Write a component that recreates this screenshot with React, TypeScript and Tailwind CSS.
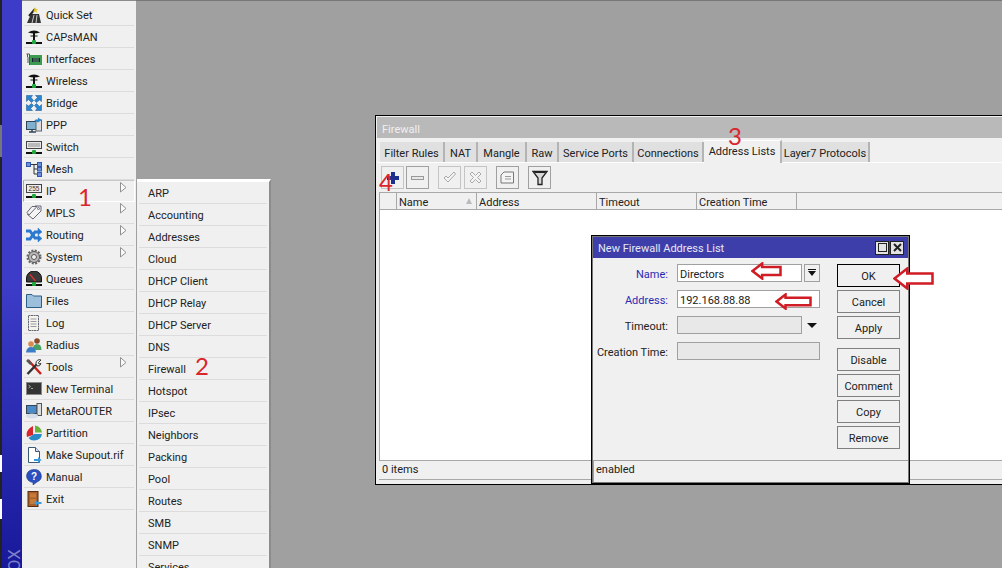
const mainMenu = [
  { label: "Quick Set", icon: "quickset" },
  { label: "CAPsMAN", icon: "antenna" },
  { label: "Interfaces", icon: "interfaces" },
  { label: "Wireless", icon: "antenna" },
  { label: "Bridge", icon: "bridge" },
  { label: "PPP", icon: "ppp" },
  { label: "Switch", icon: "switch" },
  { label: "Mesh", icon: "mesh" },
  { label: "IP", icon: "ip", arrow: true, active: true },
  { label: "MPLS", icon: "mpls", arrow: true },
  { label: "Routing", icon: "routing", arrow: true },
  { label: "System", icon: "system", arrow: true },
  { label: "Queues", icon: "queues" },
  { label: "Files", icon: "files" },
  { label: "Log", icon: "log" },
  { label: "Radius", icon: "radius" },
  { label: "Tools", icon: "tools", arrow: true },
  { label: "New Terminal", icon: "terminal" },
  { label: "MetaROUTER", icon: "meta" },
  { label: "Partition", icon: "partition" },
  { label: "Make Supout.rif", icon: "supout" },
  { label: "Manual", icon: "manual" },
  { label: "Exit", icon: "exit" },
];

const ipMenu = ["ARP", "Accounting", "Addresses", "Cloud", "DHCP Client", "DHCP Relay", "DHCP Server", "DNS", "Firewall", "Hotspot", "IPsec", "Neighbors", "Packing", "Pool", "Routes", "SMB", "SNMP", "Services"];

const tabs = [
  { label: "Filter Rules", w: "w-[65px]" },
  { label: "NAT", w: "w-[33px]" },
  { label: "Mangle", w: "w-[49px]" },
  { label: "Raw", w: "w-[32px]" },
  { label: "Service Ports", w: "w-[75px]" },
  { label: "Connections", w: "w-[70px]" },
];

const columns = [
  { label: "", w: "w-[17px]" },
  { label: "Name", w: "w-[80px]", sort: true },
  { label: "Address", w: "w-[120px]" },
  { label: "Timeout", w: "w-[100px]" },
  { label: "Creation Time", w: "w-[100px]" },
];

const Base = () => (
  <>
    <rect x="0" y="13" width="16" height="2" fill="#111" />
    <rect x="6" y="11" width="4" height="4" rx="1" fill="#1fa83c" />
  </>
);

function MenuIcon({ name }: { name: string }) {
  let body = null;
  switch (name) {
    case "quickset":
      body = (
        <>
          <path d="M1 16 L5 7 H13 L15 16 Z" fill="#333" />
          <path d="M6 16 L8 8 M10 16 L11 8" stroke="#ccc" strokeWidth="1" />
          <path d="M3 9 L9 2" stroke="#222" strokeWidth="2" />
          <path d="M9 0 L10 2 L12 2 L10.5 3.5 L11 6 L9 4.5 L7 5 L8 3 Z" fill="#e8c820" />
        </>
      );
      break;
    case "antenna":
      body = (
        <>
          <path d="M2 3.5 Q8 -0.5 14 3.5 Q8 5.5 2 3.5 Z" fill="#111" />
          <rect x="7" y="4" width="2" height="8" fill="#111" />
          <path d="M4.5 7 H11.5" stroke="#111" strokeWidth="1" />
          <Base />
        </>
      );
      break;
    case "interfaces":
      body = (
        <>
          <path d="M0.5 3 H3.5 V14 M1.5 3 V6 M2 6 V12" stroke="#555" strokeWidth="1" fill="none" />
          <rect x="4" y="4" width="12" height="10" fill="#3c9a52" />
          <rect x="6" y="7" width="8" height="4" fill="#123" />
          <path d="M8 7 V11 M10 7 V11 M12 7 V11" stroke="#8c8" strokeWidth="0.7" />
        </>
      );
      break;
    case "bridge":
      body = (
        <g fill="#2a86d0" stroke="#164e88" strokeWidth="0.5">
          <path d="M0.5 0.5 H6.5 L5 2.5 L7.5 5.5 L5.5 7.5 L2.5 4.5 L0.5 6.5 Z" />
          <path d="M15.5 0.5 V6.5 L13.5 5 L10.5 7.5 L8.5 5.5 L11.5 2.5 L9.5 0.5 Z" />
          <path d="M0.5 15.5 V9.5 L2.5 11 L5.5 8.5 L7.5 10.5 L4.5 13.5 L6.5 15.5 Z" />
          <path d="M15.5 15.5 H9.5 L11 13.5 L8.5 10.5 L10.5 8.5 L13.5 11.5 L15.5 9.5 Z" />
        </g>
      );
      break;
    case "ppp":
      body = (
        <>
          <rect x="0.5" y="4.5" width="11" height="8" fill="#7fb0d0" stroke="#345" />
          <rect x="10" y="3" width="5.5" height="11" fill="#ddd" stroke="#567" />
          <path d="M3 15 H10 M6 12 V15" stroke="#345" strokeWidth="1.5" />
          <path d="M8 3 H12 V0.5 L15.5 3 L12 5.5 Z" fill="#2a86d0" />
        </>
      );
      break;
    case "switch":
      body = (
        <>
          <rect x="0.5" y="2.5" width="15" height="7" fill="#e8e8e8" stroke="#444" />
          <path d="M2.5 5 H13.5 M2.5 7 H13.5" stroke="#333" strokeWidth="1" strokeDasharray="1 1" />
          <Base />
        </>
      );
      break;
    case "mesh":
      body = (
        <>
          <path d="M3 3.5 H13 M8 3.5 V13 H13 M8 8 H13" stroke="#333" strokeWidth="1" fill="none" />
          <rect x="0.5" y="1.5" width="4" height="4" fill="#6b93dd" stroke="#35a" />
          <rect x="11.5" y="1.5" width="4" height="4" fill="#6b93dd" stroke="#35a" />
          <rect x="11.5" y="6.5" width="4" height="3.5" fill="#6b93dd" stroke="#35a" />
          <rect x="11.5" y="11.5" width="4" height="4" fill="#6b93dd" stroke="#35a" />
        </>
      );
      break;
    case "ip":
      body = (
        <>
          <rect x="0.5" y="1.5" width="15" height="8" fill="#eee" stroke="#444" />
          <text x="8" y="8" textAnchor="middle" fontSize="6.5" fill="#333" fontFamily="Liberation Sans">255</text>
          <Base />
        </>
      );
      break;
    case "mpls":
      body = (
        <g fill="#f4f4f4" stroke="#667" strokeWidth="1">
          <path d="M9 1 H15 V6 L7 14 L1.5 9.5 Z" />
          <path d="M6 1.5 H11 L3 10 L1 7.5 Z" />
          <circle cx="12.5" cy="3.5" r="1" />
        </g>
      );
      break;
    case "routing":
      body = (
        <g fill="none" stroke="#2a78d0">
          <path d="M0 4 H4 L9 11 H13" strokeWidth="3" />
          <path d="M0 12 H4 L9 5 H13" strokeWidth="3" />
          <path d="M12 1 L16 5 L12 8 Z M12 8 L16 11.5 L12 15 Z" fill="#2a78d0" strokeWidth="0.5" />
        </g>
      );
      break;
    case "system":
      body = (
        <>
          <circle cx="8" cy="8" r="5.5" fill="#b8b8b8" stroke="#555" />
          <circle cx="8" cy="8" r="6.5" fill="none" stroke="#666" strokeWidth="2" strokeDasharray="2 1.4" />
          <circle cx="8" cy="8" r="2.5" fill="#f0f0f0" stroke="#555" />
        </>
      );
      break;
    case "queues":
      body = (
        <>
          <path d="M0.5 11 V7 A7.5 7 0 0 1 15.5 7 V11 Z" fill="#3a3a3a" stroke="#111" />
          <path d="M4 3.5 L9.5 10" stroke="#d33" strokeWidth="1.3" />
          <Base />
        </>
      );
      break;
    case "files":
      body = (
        <path d="M0.5 14.5 V1.5 H6 L7.5 3 H15.5 V14.5 Z" fill="#9cc0dc" stroke="#2c5f88" />
      );
      break;
    case "log":
      body = (
        <>
          <rect x="2.5" y="0.5" width="10" height="15" fill="#f4f4e8" stroke="#667" strokeDasharray="2 0.5" />
          <path d="M4.5 4 H10.5 M4.5 6.5 H10.5 M4.5 9 H10.5 M4.5 11.5 H10.5" stroke="#99a" />
        </>
      );
      break;
    case "radius":
      body = (
        <>
          <circle cx="11" cy="4" r="2.8" fill="#8a4a28" />
          <path d="M6.5 13 Q7 7 11 7 Q15.5 7 15.5 13 Z" fill="#4aa060" />
          <circle cx="5" cy="7" r="2.8" fill="#d88a50" />
          <path d="M0 15.5 Q0.5 10 5 10 Q9.5 10 10 15.5 Z" fill="#3a7ec8" />
        </>
      );
      break;
    case "tools":
      body = (
        <>
          <path d="M2 1 L15 15" stroke="#c81e1e" strokeWidth="2.5" />
          <path d="M1 1 L5 5" stroke="#555" strokeWidth="2.5" />
          <path d="M1.5 15 L11 5" stroke="#333" strokeWidth="2.5" />
          <path d="M10 4.5 A3.5 3.5 0 0 1 15 1 L12.5 3.5 L13 5 L15 4.5 A3.5 3.5 0 0 1 11 7 Z" fill="#eee" stroke="#333" />
        </>
      );
      break;
    case "terminal":
      body = (
        <>
          <rect x="0.5" y="1.5" width="15" height="12" fill="#333" stroke="#888" />
          <path d="M2.5 4 L4.5 5.5 L2.5 7 M5 7.5 H7" stroke="#ddd" strokeWidth="0.7" fill="none" />
        </>
      );
      break;
    case "meta":
      body = (
        <>
          <rect x="0.5" y="2.5" width="10.5" height="8" fill="#4a8ac8" stroke="#345" />
          <rect x="11" y="0.5" width="4.5" height="12" fill="#ddd" stroke="#555" />
          <ellipse cx="6" cy="13" rx="6" ry="2.5" fill="#d4dde8" />
        </>
      );
      break;
    case "partition":
      body = (
        <>
          <path d="M7 1 V10 L1 12 Q-1 5 7 1 Z" fill="#d8262c" />
          <path d="M9 0.5 Q15 1.5 16 7.5 H9 Z" fill="#6ab43c" />
          <path d="M8 9 H16 Q15 15 8 15.5 Q4.5 15.5 2.5 13 Z" fill="#2a8ac8" />
        </>
      );
      break;
    case "supout":
      body = (
        <>
          <path d="M2.5 0.5 H9.5 L13.5 4.5 V15.5 H2.5 Z" fill="#fff" stroke="#3a5a78" />
          <path d="M9.5 0.5 V4.5 H13.5" fill="#dde" stroke="#3a5a78" />
          <path d="M8 12 H12 V10 L15.5 13 L12 15.8 V14 H8 Z" fill="#3a9ae0" />
        </>
      );
      break;
    case "manual":
      body = (
        <>
          <path d="M8 0.5 A7 6.5 0 0 1 11 13 L7 16 V13.5 A7 6.5 0 0 1 8 0.5 Z" fill="#2a50c0" stroke="#1a3080" strokeWidth="0.5" />
          <text x="8" y="11" textAnchor="middle" fontSize="10" fontWeight="700" fill="#fff" fontFamily="Liberation Sans">?</text>
        </>
      );
      break;
    case "exit":
      body = (
        <>
          <rect x="2" y="0.5" width="10" height="15" fill="#a8612a" stroke="#5a2c10" />
          <rect x="4" y="2.5" width="6" height="4" fill="#c87a38" />
          <rect x="4" y="8" width="6" height="5" fill="#c87a38" />
          <path d="M8 12 L11 9.5 V11 H15.5 V13 H11 V14.5 Z" fill="#3a9ae0" />
        </>
      );
      break;
  }
  return (
    <svg width="16" height="16" viewBox="0 0 16 16" className="shrink-0">
      {body}
    </svg>
  );
}

function MainMenuRow({ label, icon, arrow, active }: { label: string; icon: string; arrow?: boolean; active?: boolean }) {
  return (
    <div className={`relative flex h-[22px] items-center gap-[4px] ${active ? "mx-[1px] border border-white border-l-[#a8a8a8] border-t-[#c8c8c8] pl-[2px]" : "mx-[2px] border-b border-[#dcdcdc] pl-[2px]"}`}>
      <MenuIcon name={icon} />
      <span className="mt-[3px]">{label}</span>
      {arrow && (
        <svg width="7" height="11" viewBox="0 0 7 11" className="absolute right-[7px] top-[1px]">
          <path d="M0.5 0.5 L6 5.5 L0.5 10 Z" fill="#fafafa" stroke="#909090" />
        </svg>
      )}
    </div>
  );
}

function ToolButton({ dim, children }: { dim?: boolean; children: React.ReactNode }) {
  return (
    <div className={`flex h-[23px] w-[23px] items-center justify-center border ${dim ? "border-[#c4c4c4]" : "border-[#a0a0a0]"}`}>
      {children}
    </div>
  );
}

function DialogButton({ label, primary }: { label: string; primary?: boolean }) {
  return (
    <div className={`flex h-[23px] w-[63px] items-center justify-center border pt-[3px] ${primary ? "border-black" : "border-[#808080]"}`}>
      {label}
    </div>
  );
}

function RedArrow({ className, w, h }: { className: string; w: number; h: number }) {
  const m = h / 2;
  const head = h * 0.62;
  return (
    <svg width={w} height={h} viewBox={`0 0 ${w} ${h}`} className={`absolute ${className}`}>
      <path
        d={`M1.5 ${m} L${head} 1.5 V${h * 0.28} H${w - 1.5} V${h * 0.72} H${head} V${h - 1.5} Z`}
        fill="#fff"
        stroke="#d01c24"
        strokeWidth="2.5"
      />
    </svg>
  );
}

function FormRow({ label, blue, children }: { label: string; blue?: boolean; children: React.ReactNode }) {
  return (
    <div className="flex h-[18px] items-center">
      <div className={`w-[73px] whitespace-nowrap pt-[5px] text-right ${blue ? "text-[#2a2ab4]" : ""}`}>{label}</div>
      <div className="ml-[9px] flex items-center">{children}</div>
    </div>
  );
}

export default function App() {
  return (
    <div className="relative flex h-[568px] w-[1002px] overflow-hidden bg-[#a0a0a0] font-['Roboto',sans-serif] text-[11px] text-[#222]">
      <div className="flex w-[2px] shrink-0 flex-col">
        <div className="h-[125px] bg-[#222]" />
        <div className="h-[32px] bg-[#777]" />
        <div className="h-[298px] bg-[#222]" />
        <div className="h-[17px] bg-white" />
        <div className="h-[27px] bg-[#222]" />
        <div className="h-[20px] bg-white" />
        <div className="flex-1 bg-[#222]" />
      </div>

      <div className="flex w-[20px] shrink-0 flex-col items-center justify-end overflow-hidden bg-gradient-to-b from-[#3c3cc8] from-50% to-[#18189a]">
        <span className="-mb-[3px] ml-[4px] rotate-180 text-[17px] leading-none text-[#8080c8] [writing-mode:vertical-rl]">OX</span>
      </div>

      <div className="w-[114px] shrink-0 border-t border-t-[#8c8c8c] bg-[#f0f0f0] pt-[3px]">
        {mainMenu.map((item) => (
          <MainMenuRow key={item.label} {...item} />
        ))}
      </div>

      <div className="h-[1px] flex-1 bg-[#777]" />

      {/* IP submenu */}
      <div className="absolute left-[137px] top-[179px] w-[134px] border-r-2 border-t-[3px] border-r-[#8c8c8c] border-t-white bg-[#f0f0f0]">
        {ipMenu.map((label) => (
          <div key={label} className="mx-[2px] flex h-[22px] items-center border-b border-[#dcdcdc] pl-[9px] pt-[3px]">
            {label}
          </div>
        ))}
      </div>

      {/* Firewall window */}
      <div className="absolute left-[375px] top-[115px] flex h-[370px] w-[640px] flex-col border border-r-0 border-black bg-[#f0f0f0] pl-[1px] pt-[1px]">
        <div className="flex h-[21px] items-center bg-[#b9b9b9] pl-[5px] pt-[5px] text-[#f0f0f0]">Firewall</div>
        <div className="mt-[3px] flex h-[22px] items-end whitespace-nowrap border-b border-white pl-[3px]">
          {tabs.map((t) => (
            <div key={t.label} className={`flex h-[20px] items-center justify-center border-r-2 border-r-[#b4b4b4] bg-[#e0e0e0] pt-[4px] ${t.w}`}>
              {t.label}
            </div>
          ))}
          <div className="-mb-[1px] flex h-[23px] w-[78px] items-center justify-center border-r-2 border-t border-r-[#b4b4b4] border-t-white bg-[#f0f0f0]">
            Address Lists
          </div>
          <div className="flex h-[20px] w-[88px] items-center justify-center border-r-2 border-r-[#b4b4b4] bg-[#e0e0e0] pt-[4px]">Layer7 Protocols</div>
        </div>
        <div className="flex h-[29px] items-center pl-[4px]">
          <ToolButton dim>
            <svg width="14" height="14" viewBox="0 0 14 14">
              <path d="M5 1 H9 V5 H13 V9 H9 V13 H5 V9 H1 V5 H5 Z" fill="#1c2f8c" />
            </svg>
          </ToolButton>
          <div className="ml-[2px]">
            <ToolButton>
              <div className="h-[4px] w-[13px] border border-[#999] bg-[#e8e8e8]" />
            </ToolButton>
          </div>
          <div className="ml-[9px] flex gap-[3px]">
            <ToolButton dim>
              <svg width="13" height="13" viewBox="0 0 13 13">
                <path d="M1 7 L3 5 L5 7 L11 1 L12.5 3 L5 11 Z" fill="#f4f4f4" stroke="#aaa" />
              </svg>
            </ToolButton>
            <ToolButton dim>
              <svg width="13" height="13" viewBox="0 0 13 13">
                <path d="M1 3 L3 1 L6.5 4.5 L10 1 L12 3 L8.5 6.5 L12 10 L10 12 L6.5 8.5 L3 12 L1 10 L4.5 6.5 Z" fill="#f4f4f4" stroke="#aaa" />
              </svg>
            </ToolButton>
          </div>
          <div className="ml-[9px]">
            <ToolButton>
              <svg width="15" height="13" viewBox="0 0 15 13">
                <path d="M1 4 L4 1 H13.5 V12 H1 Z" fill="#f4f4f4" stroke="#777" />
                <path d="M5 5.5 H11 M5 8 H11" stroke="#999" />
              </svg>
            </ToolButton>
          </div>
          <div className="ml-[9px]">
            <ToolButton>
              <svg width="16" height="16" viewBox="0 0 16 16">
                <path d="M1 1.5 H15 L10 8 V14.5 H6 V8 Z" fill="#d8d8d8" stroke="#222" strokeWidth="1.3" />
                <path d="M3 2.5 H13" stroke="#222" />
              </svg>
            </ToolButton>
          </div>
        </div>
        <div className="ml-[2px] flex h-[18px] border-y border-[#a8a8a8]">
          {columns.map((c) => (
            <div key={c.label} className={`relative flex items-center border-l border-[#a8a8a8] pl-[2px] pt-[4px] ${c.w}`}>
              {c.label}
              {c.sort && <span className="absolute right-[4px] top-[5px] h-0 w-0 border-x-[3px] border-b-[6px] border-x-transparent border-b-[#bbb]" />}
            </div>
          ))}
          <div className="flex-1 border-l border-[#a8a8a8]" />
        </div>
        <div className="ml-[2px] flex-1 border-l border-[#a8a8a8] bg-white" />
        <div className="ml-[2px] flex h-[20px] items-center border-y border-[#a8a8a8] pl-[3px]">0 items</div>
        <div className="h-[4px]" />
      </div>

      {/* New address list dialog */}
      <div className="absolute left-[591px] top-[235px] flex h-[249px] w-[319px] flex-col border border-black bg-[#777] p-[1px]">
        <div className="flex h-[21px] shrink-0 items-center justify-between bg-[#3e3eaa] pl-[5px] pr-[4px] text-[#e8e8f4]">
          <span className="mt-[4px]">New Firewall Address List</span>
          <div className="flex gap-[1px]">
            <div className="flex h-[14px] w-[14px] items-center justify-center border border-[#222] bg-[#e4e4e4]">
              <div className="h-[9px] w-[9px] border border-[#222]" />
            </div>
            <div className="flex h-[14px] w-[14px] items-center justify-center border border-[#222] bg-[#e4e4e4]">
              <svg width="9" height="9" viewBox="0 0 9 9">
                <path d="M1 1 L8 8 M8 1 L1 8" stroke="#222" strokeWidth="2" />
              </svg>
            </div>
          </div>
        </div>
        <div className="flex flex-1 bg-[#f0f0f0] pl-[2px] pt-[6px]">
          <div className="flex flex-col gap-[8px]">
            <FormRow label="Name:" blue>
              <div className="flex h-[18px] w-[125px] items-center border border-[#a0a0a0] bg-white pl-[2px] pt-[4px]">Directors</div>
              <div className="ml-[2px] flex h-[18px] w-[16px] items-center justify-center border border-[#a0a0a0]">
                <svg width="8" height="8" viewBox="0 0 8 8">
                  <path d="M0 0 H8 V1 H0 Z M0 2 H8 L4 7 Z" fill="#111" />
                </svg>
              </div>
            </FormRow>
            <FormRow label="Address:" blue>
              <div className="flex h-[18px] w-[143px] items-center border border-[#a0a0a0] bg-white pl-[2px] pt-[4px]">192.168.88.88</div>
            </FormRow>
            <FormRow label="Timeout:">
              <div className="h-[18px] w-[125px] border border-[#a0a0a0] bg-[#e8e8e8]" />
              <span className="ml-[5px] h-0 w-0 border-x-[5px] border-t-[5px] border-x-transparent border-t-[#111]" />
            </FormRow>
            <FormRow label="Creation Time:">
              <div className="h-[18px] w-[143px] border border-[#a0a0a0] bg-[#e8e8e8]" />
            </FormRow>
          </div>
          <div className="ml-[17px] flex flex-col gap-[3px]">
            <DialogButton label="OK" primary />
            <DialogButton label="Cancel" />
            <DialogButton label="Apply" />
            <div className="mt-[6px] flex flex-col gap-[3px]">
              <DialogButton label="Disable" />
              <DialogButton label="Comment" />
              <DialogButton label="Copy" />
              <DialogButton label="Remove" />
            </div>
          </div>
        </div>
        <div className="flex h-[22px] shrink-0 items-center border-l border-t border-[#a0a0a0] bg-[#f0f0f0] pb-[3px] pl-[2px]">enabled</div>
      </div>

      {/* Hand-drawn notes over the screenshot */}
      <RedArrow className="left-[751px] top-[262px]" w={31} h={18} />
      <RedArrow className="left-[775px] top-[293px]" w={37} h={17} />
      <RedArrow className="left-[893px] top-[267px]" w={41} h={23} />
      <span className="absolute left-[78px] top-[184px] font-['Lato',sans-serif] text-[24px] leading-[26px] text-[#d8262c]">1</span>
      <span className="absolute left-[195px] top-[353px] font-['Lato',sans-serif] text-[24px] leading-[26px] text-[#d8262c]">2</span>
      <span className="absolute left-[728px] top-[123px] font-['Lato',sans-serif] text-[24px] leading-[26px] text-[#d8262c]">3</span>
      <span className="absolute left-[379px] top-[169px] font-['Lato',sans-serif] text-[24px] leading-[26px] text-[#d8262c]">4</span>
    </div>
  );
}
